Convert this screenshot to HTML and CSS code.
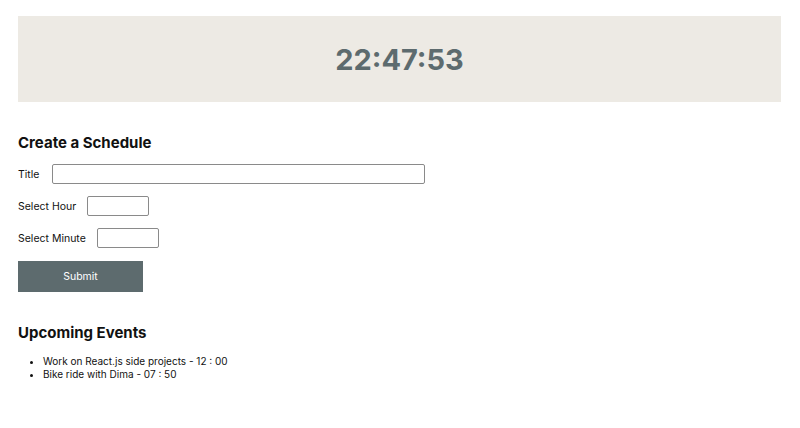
FILE: index.html
```html
<!DOCTYPE html>
<html lang="en">
<head>
  <meta charset="UTF-8" />
  <meta name="viewport" content="width=device-width, initial-scale=1.0"/>
  <title>Scheduler</title>
  <link rel="stylesheet" href="styles.css">
</head>
<body>
  <div class="clock">
    <h1>22:47:53</h1>
  </div>

  <div class="schedule">
    <h2>Create a Schedule</h2>
    <form id="scheduleForm">
      <div class="row">
        <label for="title">Title</label>
        <input type="text" id="title" class="input-title" />
      </div>
      <div class="row">
        <label for="hour">Select Hour</label>
        <input type="text" id="hour" class="input-small" />
      </div>
      <div class="row">
        <label for="minute">Select Minute</label>
        <input type="text" id="minute" class="input-small" />
      </div>
      <button type="submit">Submit</button>
    </form>
  </div>

  <div class="events">
    <h2>Upcoming Events</h2>
    <ul>
      <li>Work on React.js side projects - 12 : 00</li>
      <li>Bike ride with Dima - 07 : 50</li>
    </ul>
  </div>
</body>
</html>
```

FILE: styles.css
```css
body {
  margin: 0;
  padding: 16px 19px 0 18px;
  font-family: Inter, "Noto Sans", sans-serif;
  color: #111;
  background-color: #ffffff;
}

.clock {
  background-color: #edeae4;
  height: 86px;
  display: flex;
  align-items: center;
  justify-content: center;
}

.clock h1 {
  margin: 0;
  font-size: 29px;
  font-weight: 700;
  color: #5d6b6e;
}

h2 {
  font-size: 15px;
  font-weight: 700;
  margin: 0;
}

.schedule {
  margin-top: 31px;
}

form {
  margin-top: 12px;
  display: flex;
  flex-direction: column;
  align-items: flex-start;
  gap: 12px;
}

.row {
  display: flex;
  align-items: center;
  gap: 11px;
  height: 20px;
}

label {
  font-size: 10.5px;
}

input {
  height: 20px;
  box-sizing: border-box;
  border: 1px solid #8a8a8a;
  border-radius: 2px;
  padding: 0 4px;
  margin: 0;
}

.input-title {
  width: 373px;
  margin-left: 2px;
}

.input-small {
  width: 62px;
}

button {
  width: 125px;
  height: 31px;
  margin-top: 1px;
  background-color: #5d6b6e;
  border: none;
  color: #fff;
  font-family: inherit;
  font-size: 10.5px;
  cursor: pointer;
}

.events {
  margin-top: 31px;
}

ul {
  margin: 13px 0 0 0;
  padding-left: 25px;
  font-size: 10px;
  line-height: 13px;
}
```
